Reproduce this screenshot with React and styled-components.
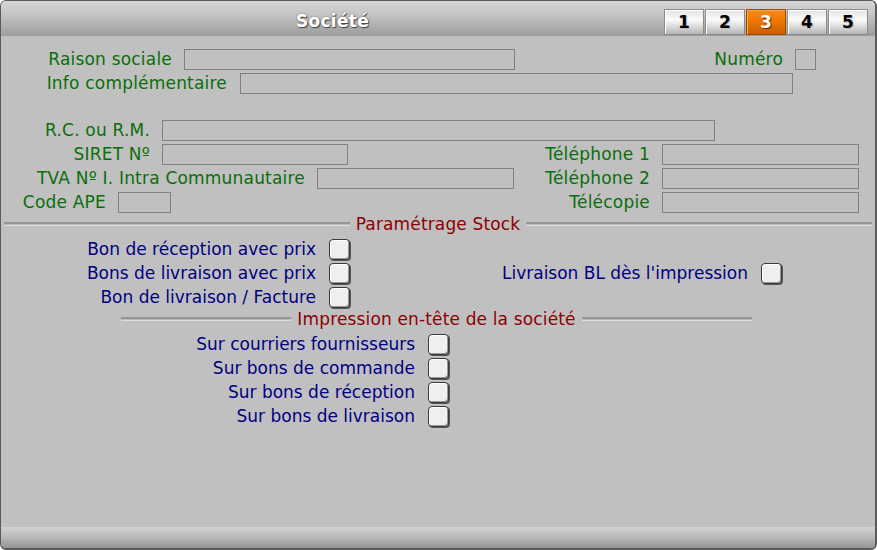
import React from "react";
import styled, { createGlobalStyle } from "styled-components";

const Global = createGlobalStyle`
  html, body { margin: 0; padding: 0; background: #ffffff; }
  body { font-family: "DejaVu Sans", Verdana, sans-serif; }
  * { box-sizing: border-box; }
`;

const Window = styled.div`
  width: 877px;
  height: 550px;
  background: #c0c0c0;
  border: 1px solid #5a5a5a;
  border-right-width: 2px;
  border-bottom-width: 2px;
  border-radius: 6px;
  overflow: hidden;
  display: flex;
  flex-direction: column;
`;

const Header = styled.div`
  height: 35px;
  flex: none;
  display: flex;
  align-items: flex-start;
  background: linear-gradient(to bottom, #d6d6d6 0%, #c4c4c4 40%, #9c9c9c 100%);
  padding-right: 7px;
`;

const Title = styled.div`
  flex: 1;
  text-align: center;
  color: #ffffff;
  font-weight: bold;
  font-size: 17px;
  line-height: 35px;
  padding-top: 3px;
  letter-spacing: 0.3px;
  text-shadow: 1px 1px 1px #404040, 0 0 2px #707070;
`;

const Tabs = styled.div`
  display: flex;
  gap: 1px;
  padding-top: 8px;
`;

const Tab = styled.div`
  width: 40px;
  height: 26px;
  display: flex;
  align-items: center;
  justify-content: center;
  font-weight: bold;
  font-size: 17px;
  border: 1px solid ${(p) => (p.$active ? "#9a4a00" : "#8c8c8c")};
  color: ${(p) => (p.$active ? "#ffffff" : "#000000")};
  text-shadow: ${(p) => (p.$active ? "1px 1px 1px #5a2a00" : "1px 1px 0 #b8b8b8")};
  background: ${(p) =>
    p.$active
      ? "linear-gradient(to bottom, #f58a1e 0%, #f07800 45%, #c85f00 100%)"
      : "linear-gradient(to bottom, #e2e2e2 0%, #fbfbfb 40%, #d4d4d4 75%, #b4b4b4 100%)"};
  box-shadow: inset 1px 1px 0 ${(p) => (p.$active ? "#ffa850" : "#ffffff")};
`;

const Content = styled.div`
  flex: 1;
  display: flex;
  flex-direction: column;
  padding-top: 11px;
`;

const Row = styled.div`
  height: 24px;
  display: flex;
  align-items: center;
  margin-top: ${(p) => p.$mt || 0}px;
`;

const Label = styled.span`
  width: ${(p) => p.$w}px;
  flex: none;
  text-align: right;
  padding-right: ${(p) => p.$pr ?? 12}px;
  font-size: 17px;
  letter-spacing: ${(p) => (p.$blue ? 0 : 0.2)}px;
  white-space: nowrap;
  color: ${(p) => (p.$blue ? "#000080" : "#0a6e0a")};
`;

const Input = styled.div`
  width: ${(p) => p.$w}px;
  height: 21px;
  flex: none;
  border: 1px solid #808080;
  background: #c0c0c0;
`;

const Separator = styled.div`
  height: 20px;
  display: flex;
  align-items: center;
  margin: 0 ${(p) => p.$mr}px 3px ${(p) => p.$ml}px;
`;

const Line = styled.div`
  flex: 1;
  height: 4px;
  background: linear-gradient(to bottom, #969696 0%, #969696 50%, #dedede 75%, #dedede 100%);
`;

const SepText = styled.span`
  font-size: 17px;
  letter-spacing: 0.15px;
  color: #8b0000;
  padding: 0 6px;
  white-space: nowrap;
`;

const Check = styled.div`
  width: 21px;
  height: 21px;
  flex: none;
  border: 1px solid #3a3a3a;
  border-radius: 4px;
  background: #efefef;
  box-shadow: inset 1px 1px 0 #ffffff, inset -1px -1px 0 #9a9a9a, 1px 1px 0 #555555;
`;

const Footer = styled.div`
  height: 21px;
  flex: none;
  background: linear-gradient(to bottom, #d2d2d2 0%, #b8b8b8 50%, #949494 100%);
`;

function Field({ label, lw, iw, pr }) {
  return (
    <>
      <Label $w={lw} $pr={pr}>{label}</Label>
      <Input $w={iw} />
    </>
  );
}

function CheckField({ label, lw }) {
  return (
    <>
      <Label $w={lw} $blue $pr={13}>{label}</Label>
      <Check />
    </>
  );
}

export default function App() {
  return (
    <>
      <Global />
      <Window>
        <Header>
          <Title>Société</Title>
          <Tabs>
            {[1, 2, 3, 4, 5].map((n) => (
              <Tab key={n} $active={n === 3}>{n}</Tab>
            ))}
          </Tabs>
        </Header>
        <Content>
          <Row>
            <Field label="Raison sociale" lw={183} iw={331} />
            <Field label="Numéro" lw={280} iw={21} />
          </Row>
          <Row>
            <Field label="Info complémentaire" lw={239} iw={553} pr={13} />
          </Row>
          <Row $mt={23}>
            <Field label="R.C. ou R.M." lw={161} iw={553} />
          </Row>
          <Row>
            <Field label="SIRET Nº" lw={161} iw={186} />
            <Field label="Téléphone 1" lw={314} iw={197} />
          </Row>
          <Row>
            <Field label="TVA Nº I. Intra Communautaire" lw={316} iw={197} />
            <Field label="Téléphone 2" lw={148} iw={197} />
          </Row>
          <Row>
            <Field label="Code APE" lw={117} iw={53} />
            <Field label="Télécopie" lw={491} iw={197} />
          </Row>
          <Separator $ml={3} $mr={3}>
            <Line />
            <SepText>Paramétrage Stock</SepText>
            <Line />
          </Separator>
          <Row>
            <CheckField label="Bon de réception avec prix" lw={328} />
          </Row>
          <Row>
            <CheckField label="Bons de livraison avec prix" lw={328} />
            <CheckField label="Livraison BL dès l'impression" lw={411} />
          </Row>
          <Row>
            <CheckField label="Bon de livraison / Facture" lw={328} />
          </Row>
          <Separator $ml={120} $mr={123}>
            <Line />
            <SepText>Impression en-tête de la société</SepText>
            <Line />
          </Separator>
          <Row>
            <CheckField label="Sur courriers fournisseurs" lw={427} />
          </Row>
          <Row>
            <CheckField label="Sur bons de commande" lw={427} />
          </Row>
          <Row>
            <CheckField label="Sur bons de réception" lw={427} />
          </Row>
          <Row>
            <CheckField label="Sur bons de livraison" lw={427} />
          </Row>
        </Content>
        <Footer />
      </Window>
    </>
  );
}
